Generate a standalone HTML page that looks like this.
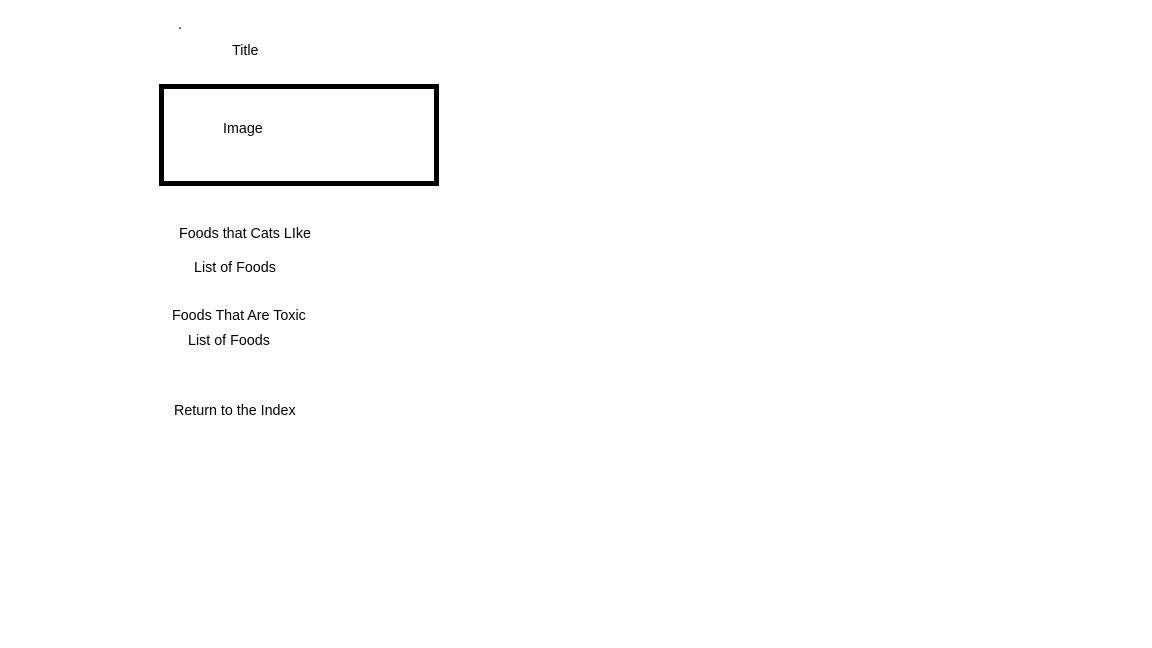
<!DOCTYPE html>
<html><head><style>
body{margin:0;width:1152px;height:648px;background:#fff;position:relative;overflow:hidden;font-family:"Liberation Sans",sans-serif;font-size:14.3px;color:#000}
.t{position:absolute;line-height:16px;white-space:nowrap}
.box{position:absolute;left:159px;top:84px;width:270px;height:92px;border:5px solid #000}
</style></head><body>
<div class="t" style="left:178px;top:17px">.</div>
<div class="t" style="left:232px;top:43px">Title</div>
<div class="box"></div>
<div class="t" style="left:223px;top:121px">Image</div>
<div class="t" style="left:179px;top:226px">Foods that Cats LIke</div>
<div class="t" style="left:194px;top:260px">List of Foods</div>
<div class="t" style="left:172px;top:308px">Foods That Are Toxic</div>
<div class="t" style="left:188px;top:333px">List of Foods</div>
<div class="t" style="left:174px;top:403px">Return to the Index</div>
</body></html>
